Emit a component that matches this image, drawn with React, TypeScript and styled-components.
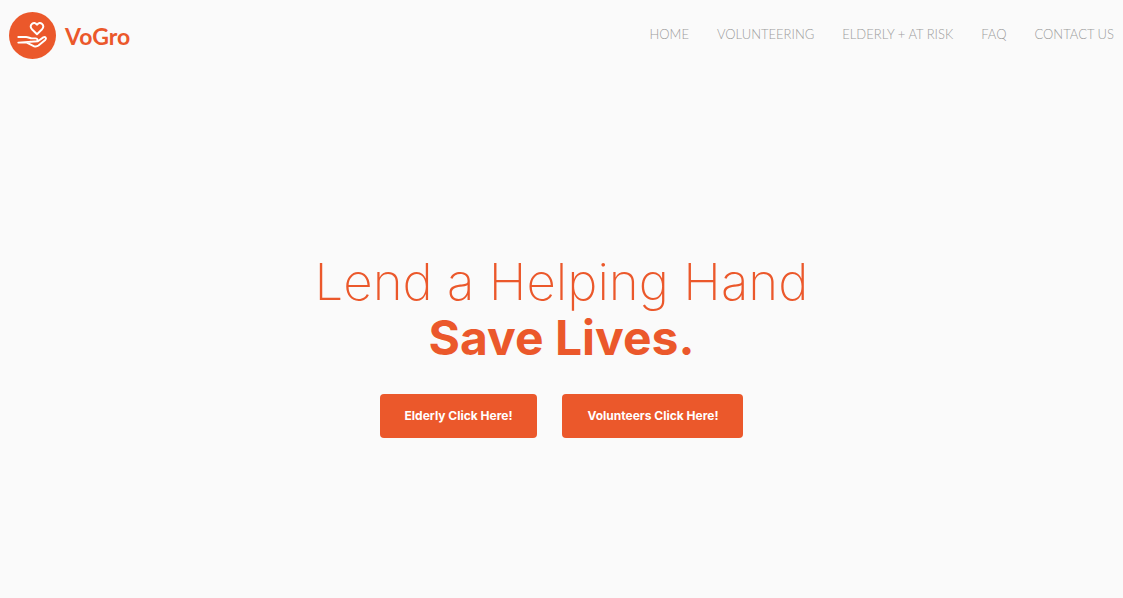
import React from 'react';
import styled, { createGlobalStyle } from 'styled-components';

const accent = '#eb582b';

const GlobalStyle = createGlobalStyle`
  *, *::before, *::after { box-sizing: border-box; }
  body {
    margin: 0;
    background: #fafafa;
    font-family: Inter, 'Open Sans', sans-serif;
  }
`;

const Page = styled.div`
  display: flex;
  flex-direction: column;
  min-height: 100vh;
`;

const Header = styled.header`
  display: flex;
  align-items: center;
  justify-content: space-between;
  padding: 12px 9px;
`;

const Brand = styled.a`
  display: flex;
  align-items: center;
  gap: 8px;
  color: ${accent};
  font-family: Lato, sans-serif;
  font-size: 23px;
  font-weight: 700;
  line-height: 32px;
  text-decoration: none;
`;

const LogoMark = styled.svg`
  display: block;
  width: 48px;
  height: 48px;
`;

const Nav = styled.nav`
  display: flex;
  gap: 28px;
  padding-bottom: 4px;
`;

const NavLink = styled.a`
  color: #9c9c9c;
  font-family: Lato, sans-serif;
  font-size: 13px;
  font-weight: 300;
  line-height: 20px;
  text-decoration: none;
  white-space: nowrap;
`;

const Hero = styled.main`
  flex: 1;
  display: flex;
  flex-direction: column;
  align-items: center;
  justify-content: center;
  gap: 28px;
  padding-top: 22px;
`;

const Title = styled.h1`
  margin: 0;
  color: ${accent};
  font-size: 51px;
  font-weight: 200;
  line-height: 56px;
  text-align: center;
`;

const Strong = styled.strong`
  display: block;
  font-size: 48px;
  font-weight: 700;
`;

const Actions = styled.div`
  display: flex;
  flex-wrap: wrap;
  justify-content: center;
  gap: 25px;
`;

const ActionButton = styled.button`
  height: 44px;
  padding: 0 25px;
  border: 0;
  border-radius: 4px;
  background: ${accent};
  color: #fff;
  font-family: inherit;
  font-size: 12px;
  font-weight: 700;
  line-height: 16px;
  cursor: pointer;
`;

const links = ['HOME', 'VOLUNTEERING', 'ELDERLY + AT RISK', 'FAQ', 'CONTACT US'];

export default function App() {
  return (
    <Page>
      <GlobalStyle />
      <Header>
        <Brand href="#home">
          <LogoMark viewBox="0 0 48 48" aria-hidden="true">
            <circle cx="23.5" cy="23.5" r="23.5" fill={accent} />
            <g fill="none" stroke="#fff" strokeWidth="1.9" strokeLinejoin="round" strokeLinecap="round">
              <path d="M28 22.2 L22.9 17.2 C19.5 13 25.2 8.4 28 12.8 C30.8 8.4 36.5 13 33.1 17.2 Z" />
              <path d="M9.3 25 H17 C19.5 25 21 26.4 23 26.4 H26.5 C29.3 26.4 29 29.6 26.5 29.6 H21 M28.9 29.2 L34.3 25.4 C36.3 24.2 38 26.4 36.2 28 L29.5 33.6 C28.2 34.6 26.8 34.8 25.2 34.3 L17.8 30.6 H9.3 Z" />
            </g>
          </LogoMark>
          VoGro
        </Brand>
        <Nav aria-label="Main">
          {links.map((label) => (
            <NavLink key={label} href="#">{label}</NavLink>
          ))}
        </Nav>
      </Header>
      <Hero>
        <Title>
          Lend a Helping Hand
          <Strong>Save Lives.</Strong>
        </Title>
        <Actions>
          <ActionButton type="button">Elderly Click Here!</ActionButton>
          <ActionButton type="button">Volunteers Click Here!</ActionButton>
        </Actions>
      </Hero>
    </Page>
  );
}
